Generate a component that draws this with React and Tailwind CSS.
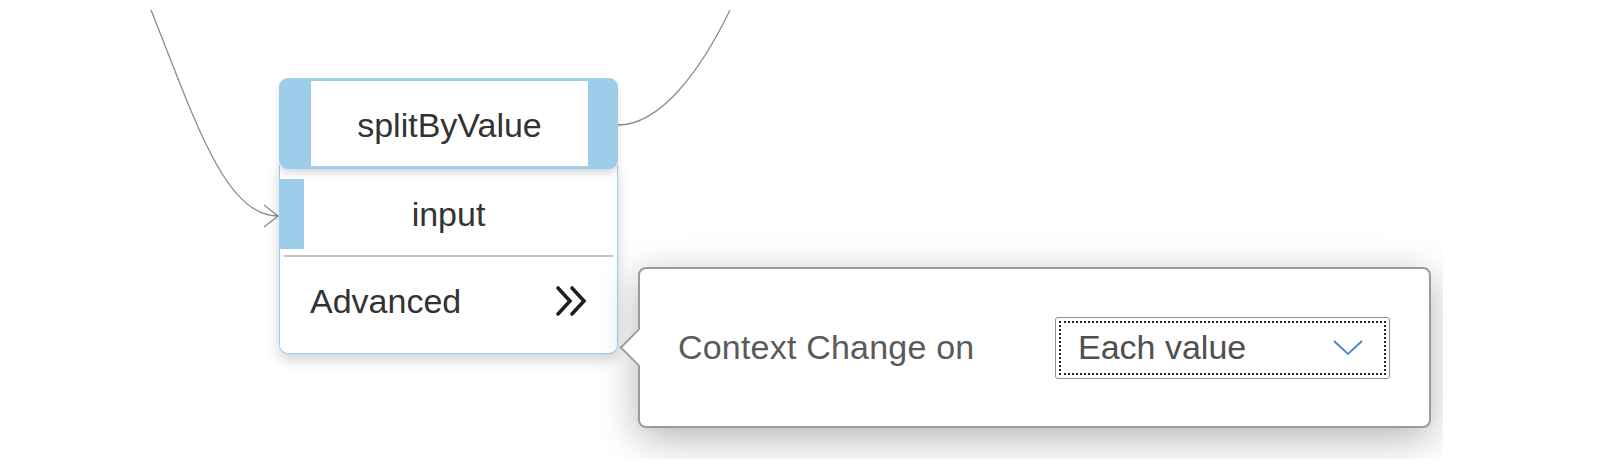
import React from 'react'

const ChevronsRight = () => (
  <svg width="36" height="32" viewBox="0 0 36 32" fill="none" stroke="#1f1f1f" strokeWidth="3.6" strokeLinecap="round" strokeLinejoin="miter">
    <polyline points="4,3 16,16 4,29" />
    <polyline points="18,3 30,16 18,29" />
  </svg>
)

const Connectors = () => (
  <svg className="absolute inset-0" width="1443" height="459" fill="none">
    <path d="M151 10 C192 112 224 216 277 216" stroke="#8c8c8c" strokeWidth="1.3" />
    <path d="M264 205 L278 216 L264 227" stroke="#8c8c8c" strokeWidth="1.3" />
    <path d="M618 125 C660 125 700 72 730 10" stroke="#8c8c8c" strokeWidth="1.3" />
  </svg>
)

const FunctionNode = () => {
  return (
    <div className="absolute left-[279px] top-[78px] w-[339px]">
      {/* header */}
      <div className="relative z-10 flex h-[91px] rounded-[9px] bg-[#9ecdec] pt-[3px] pb-[3px] pl-[32px] pr-[30px] shadow-[0_5px_6px_rgba(0,0,0,0.13)]">
        <div className="flex flex-1 items-center justify-center bg-white pt-[3px] text-[34px] text-[#333]">
          splitByValue
        </div>
      </div>
      {/* body */}
      <div className="-mt-[4px] rounded-b-[9px] border border-t-0 border-[#9ecdec] bg-white pt-[14px] pb-[8px] shadow-[0_6px_14px_rgba(0,0,0,0.18)]">
        <div className="flex h-[70px]">
          <div className="w-[24px] bg-[#9ecdec]" />
          <div className="flex flex-1 items-center justify-center pr-[24px] text-[34px] text-[#333]">input</div>
        </div>
        <div className="mx-[4px] mt-[6px] h-[2px] bg-[#c4c4c4]" />
        <div className="flex h-[88px] items-center justify-between pl-[30px] pr-[27px]">
          <span className="text-[34px] text-[#333]">Advanced</span>
          <ChevronsRight />
        </div>
      </div>
    </div>
  )
}

const ContextPopover = () => {
  return (
    <div className="absolute left-[638px] top-[267px] h-[161px] w-[793px] rounded-[8px] border-2 border-[#9b9b9b] bg-white shadow-[0_10px_40px_rgba(0,0,0,0.3)]">
      {/* arrow */}
      <div className="absolute left-[-15px] top-[65px] h-[27px] w-[27px] rotate-45 border-b-2 border-l-2 border-[#9b9b9b] bg-white" />
      <div className="relative flex h-full items-center justify-between pl-[38px] pr-[39px]">
        <span className="text-[34px] tracking-[0.2px] text-[#5a5a5a]">Context Change on</span>
        <div className="flex h-[62px] w-[335px] items-center rounded-[3px] border border-[#8796a8] bg-white p-[3px]">
          <div className="flex h-full flex-1 items-center justify-between border-2 border-dotted border-[#222] pl-[17px] pr-[21px]">
            <span className="text-[34px] text-[#4f4f4f]">Each value</span>
            <svg width="30" height="16" viewBox="0 0 30 16" fill="none" stroke="#4f8bc9" strokeWidth="2">
              <polyline points="1,1 15,14 29,1" />
            </svg>
          </div>
        </div>
      </div>
    </div>
  )
}

export default function App() {
  return (
    <div className="relative h-[470px] w-[1600px] bg-white font-['Liberation_Sans',Arial,sans-serif]">
      <div className="relative h-[459px] w-[1443px] overflow-hidden bg-white">
        <Connectors />
        <FunctionNode />
        <ContextPopover />
      </div>
    </div>
  )
}
